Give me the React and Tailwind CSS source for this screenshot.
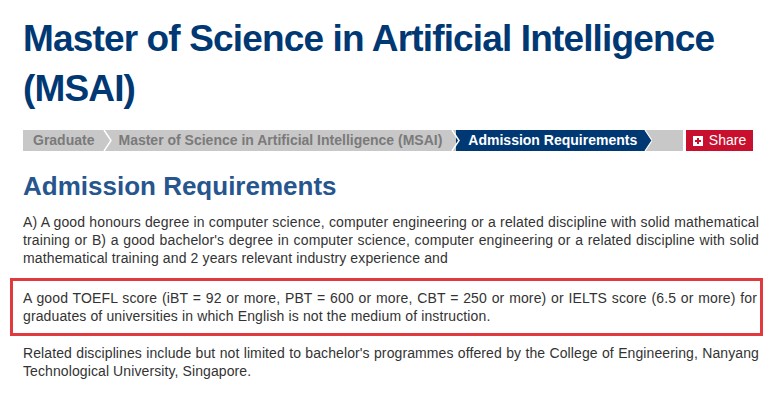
import React from 'react';

const Crumb = ({ children }) => (
  <div className="relative flex items-center h-full bg-[#c8c8c8] text-[#7a7a7a] font-bold pl-[10px] pr-[14px]">
    {children}
    {/* white chevron separator */}
    <svg className="absolute right-[-5px] top-0 h-full w-[10px] z-10" viewBox="0 0 10 21" preserveAspectRatio="none">
      <polyline points="1,0 8,10.5 1,21" fill="none" stroke="#ffffff" strokeWidth="1.5" />
    </svg>
  </div>
);

export default function App() {
  return (
    <div className="bg-white w-[767px] h-[401px] overflow-hidden text-[#333] font-['Liberation_Sans',Arial,sans-serif]">
      <div className="pl-[23px] pr-[8px] pt-[14px]">
        <h1 className="text-[37px] leading-[50px] font-bold tracking-[-0.85px] text-[#003874]">
          Master of Science in Artificial Intelligence (MSAI)
        </h1>

        {/* breadcrumb */}
        <div className="flex items-stretch h-[21px] mt-[16px] mr-[6px] text-[14px]">
          <div className="flex flex-1 items-stretch bg-[#c8c8c8] overflow-hidden">
            <Crumb>Graduate</Crumb>
            <Crumb>Master of Science in Artificial Intelligence (MSAI)</Crumb>
            <div className="relative flex items-center bg-[#003874] text-white font-bold pl-[12px] pr-[5px]">
              Admission Requirements
              <svg className="absolute right-[-10px] top-0 h-full w-[10px]" viewBox="0 0 10 21" preserveAspectRatio="none">
                <polygon points="0,0 3,0 10,10.5 3,21 0,21" fill="#003874" />
                <polyline points="3,0 10,10.5 3,21" fill="none" stroke="#ffffff" strokeWidth="1.2" />
              </svg>
            </div>
          </div>
          <div className="ml-[3px] w-[67px] flex items-center justify-center gap-[6px] bg-[#c8102e] text-white text-[14px]">
            <span className="w-[10px] h-[10px] bg-white flex items-center justify-center">
              <svg viewBox="0 0 10 10" className="w-[10px] h-[10px]">
                <rect x="4" y="2" width="2" height="6" fill="#c8102e" />
                <rect x="2" y="4" width="6" height="2" fill="#c8102e" />
              </svg>
            </span>
            Share
          </div>
        </div>

        <h2 className="mt-[18px] text-[26px] leading-[34px] font-bold text-[#27568f]">Admission Requirements</h2>

        <p className="mt-[10px] text-[14px] leading-[18px] tracking-[0.13px] text-justify">
          A) A good honours degree in computer science, computer engineering or a related discipline with solid mathematical training or B) a good bachelor's degree in computer science, computer engineering or a related discipline with solid mathematical training and 2 years relevant industry experience and
        </p>
      </div>

      <div className="ml-[10px] mr-[4px] mt-[11px] border-[3px] border-[#e0393e] pl-[10px] pr-[3px] py-[8px] text-[14px] leading-[18px] tracking-[0.13px] text-justify">
        A good TOEFL score (iBT = 92 or more, PBT = 600 or more, CBT = 250 or more) or IELTS score (6.5 or more) for graduates of universities in which English is not the medium of instruction.
      </div>

      <p className="pl-[23px] pr-[8px] mt-[8px] text-[14px] leading-[18px] tracking-[0.1px] text-justify">
        Related disciplines include but not limited to bachelor's programmes offered by the College of Engineering, Nanyang Technological University, Singapore.
      </p>
    </div>
  );
}
